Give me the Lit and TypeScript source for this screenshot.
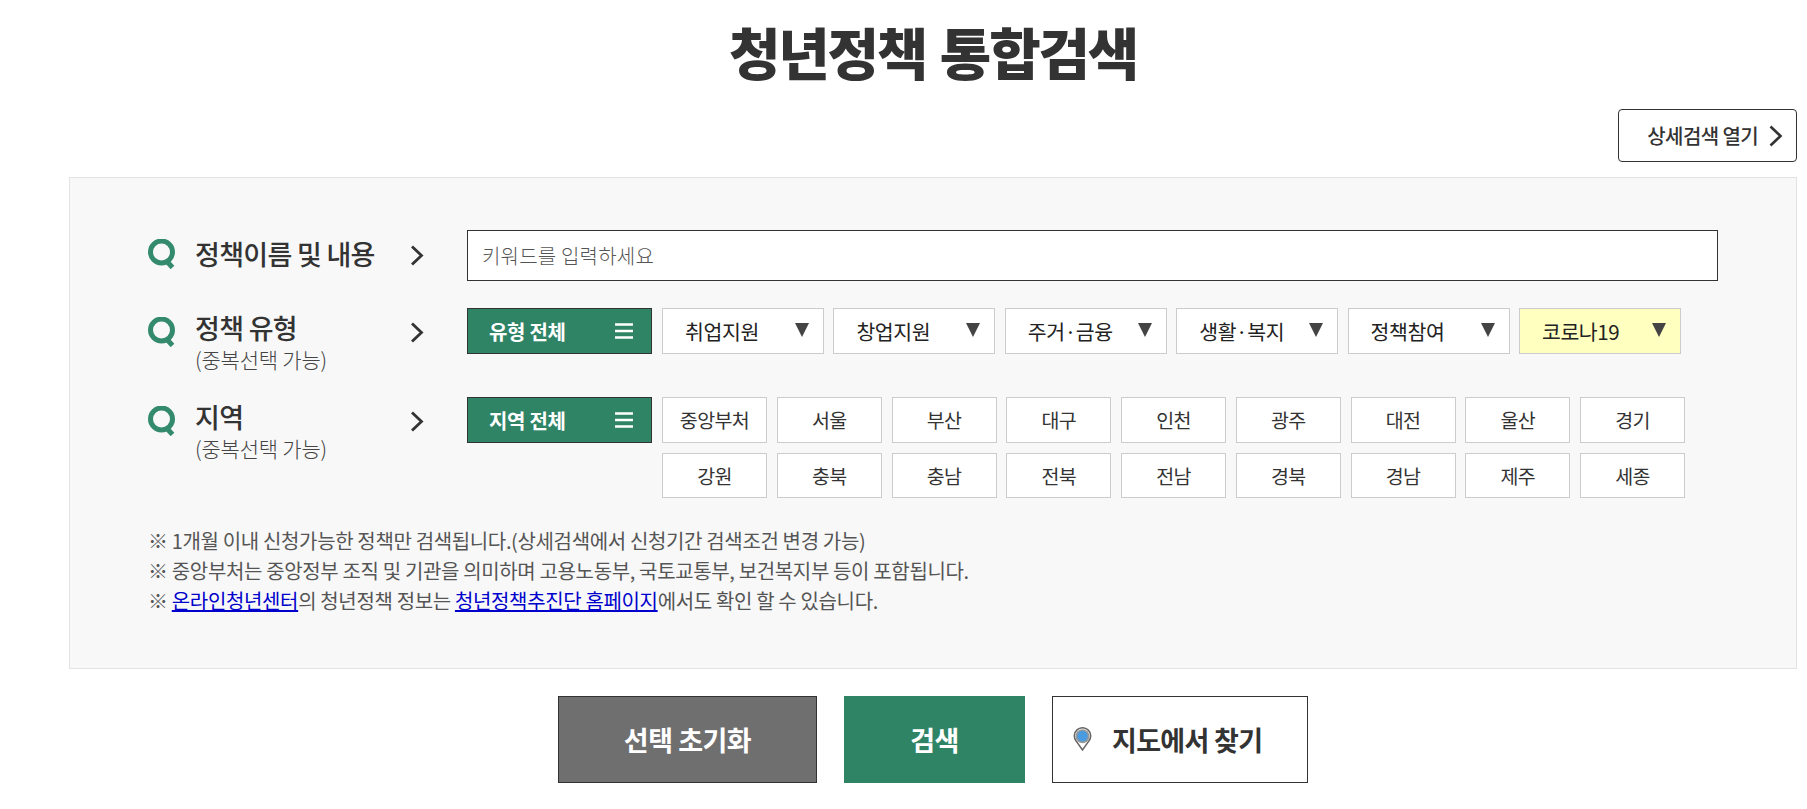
import { LitElement, html, css } from "lit";
import { customElement } from "lit/decorators.js";

const types = ["취업지원", "창업지원", "주거·금융", "생활·복지", "정책참여", "코로나19"];
const regions = ["중앙부처", "서울", "부산", "대구", "인천", "광주", "대전", "울산", "경기", "강원", "충북", "충남", "전북", "전남", "경북", "경남", "제주", "세종"];

const qIcon = html`<svg class="q" viewBox="0 0 28 30" width="28" height="30"><circle cx="13.5" cy="13" r="11" fill="none" stroke="#348a6c" stroke-width="5"/><path d="M19 22.5 L24.5 28.5" stroke="#348a6c" stroke-width="5" fill="none"/></svg>`;
const chev = html`<svg class="chev" viewBox="0 0 14 22" width="14" height="22"><path d="M2 1.5 L11.5 10.5 L2 19.5" fill="none" stroke="#333" stroke-width="2.8"/></svg>`;
const burger = html`<svg class="burger" viewBox="0 0 18 16" width="18" height="16"><path d="M0 1.5H18M0 8H18M0 14.5H18" stroke="#fff" stroke-width="2.6"/></svg>`;

@customElement("app-root")
export class AppRoot extends LitElement {
  static styles = css`
    :host { display: block; width: 1807px; height: 809px; background: #fff; color: #333; font-family: "Noto Sans CJK KR", "Noto Sans", sans-serif; overflow: hidden; }
    * { box-sizing: border-box; }
    .page { padding-left: 69px; width: 1797px; }
    h1 { margin: 0; height: 109px; padding-top: 12px; text-align: center; font-size: 56px; line-height: 78px; font-weight: 900; letter-spacing: -2.2px; word-spacing: 3px; color: #333; }
    .topbar { display: flex; justify-content: flex-end; height: 68px; }
    .detail { width: 179px; height: 53px; border: 1px solid #333; border-radius: 4px; background: #fff; display: flex; align-items: center; justify-content: flex-end; gap: 11px; padding-right: 13px; font-size: 20px; font-weight: 500; letter-spacing: -0.6px; color: #333; }
    .detail svg { flex: none; }
    .panel { width: 1728px; height: 492px; background: #f8f8f8; border: 1px solid #e3e3e6; padding: 52px 0 0 78px; }
    .row { display: flex; align-items: flex-start; }
    .label { width: 319px; display: flex; }
    .q { flex: none; margin-right: 19px; }
    .titles { width: 215px; }
    .t { font-size: 27px; line-height: 38px; font-weight: 500; letter-spacing: -0.7px; color: #333; white-space: nowrap; }
    .s { font-size: 21px; line-height: 24px; font-weight: 300; letter-spacing: -0.2px; color: #444; white-space: nowrap; }
    .chev { flex: none; }
    .r1 { height: 78px; }
    .r1 .q { margin-top: 9px; }
    .r1 .t { padding-top: 5px; }
    .r1 .chev { margin-top: 15px; }
    .input { width: 1251px; height: 51px; border: 1px solid #333; background: #fff; padding: 0 14px; font-size: 20px; line-height: 49px; font-weight: 300; letter-spacing: 0.2px; color: #555; }
    .r2 { height: 89px; }
    .r2 .q { margin-top: 9px; }
    .r2 .chev { margin-top: 14px; }
    .r2 .titles, .r3 .titles { padding-top: 1px; }
    .r3 { height: 129px; }
    .r3 .q { margin-top: 9px; }
    .r3 .chev { margin-top: 14px; }
    .all { flex: none; width: 185px; height: 46px; background: #2f8466; border: 1px solid #333; color: #fff; font-size: 20px; font-weight: 700; letter-spacing: -0.3px; display: flex; align-items: center; justify-content: space-between; padding: 0 18px 0 21px; margin-right: 10px; }
    .types { display: flex; gap: 9.4px; }
    .type { width: 162px; height: 46px; background: #fff; border: 1px solid #ccc; display: flex; align-items: center; justify-content: space-between; padding: 0 14px 0 22px; font-size: 20.5px; font-weight: 400; letter-spacing: -0.4px; color: #222; }
    .type.y { background: #ffffc0; }
    .tri { width: 0; height: 0; border-left: 7px solid transparent; border-right: 7px solid transparent; border-top: 14px solid #444; margin-bottom: 2px; }
    .regions { display: grid; grid-template-columns: repeat(9, 105px); column-gap: 9.75px; row-gap: 10px; }
    .reg { height: 45.5px; background: #fff; border: 1px solid #ccc; display: flex; align-items: center; justify-content: center; font-size: 19.5px; font-weight: 400; letter-spacing: -0.6px; color: #333; }
    .notes { font-size: 20px; line-height: 30px; font-weight: 400; letter-spacing: -0.35px; color: #555; }
    .notes a { color: #0000cc; text-decoration: underline; }
    .actions { display: flex; margin-top: 27px; padding-left: 489px; }
    .btn { height: 87px; display: flex; align-items: center; justify-content: center; font-size: 27px; font-weight: 700; letter-spacing: -0.5px; border: 1px solid #333; }
    .reset { width: 259px; background: #6f6f6f; color: #fff; margin-right: 27px; }
    .go { width: 181px; background: #2f8466; color: #fff; border-color: #2f8466; margin-right: 27px; }
    .map { width: 256px; background: #fff; color: #333; justify-content: flex-start; padding-left: 20px; letter-spacing: -0.7px; }
    .map svg { margin-right: 20px; }
  `;

  render() {
    return html`<div class="page">
      <h1>청년정책 통합검색</h1>
      <div class="topbar"><div class="detail">상세검색 열기 <svg viewBox="0 0 14 24" width="14" height="24"><path d="M1.5 2.5 L11.5 12 L1.5 21.5" fill="none" stroke="#333" stroke-width="2.6"/></svg></div></div>
      <div class="panel">
        <div class="row r1">
          <div class="label">${qIcon}<div class="titles"><div class="t">정책이름 및 내용</div></div>${chev}</div>
          <div class="input">키워드를 입력하세요</div>
        </div>
        <div class="row r2">
          <div class="label">${qIcon}<div class="titles"><div class="t">정책 유형</div><div class="s">(중복선택 가능)</div></div>${chev}</div>
          <div class="row">
            <div class="all">유형 전체 ${burger}</div>
            <div class="types">${types.map((t, i) => html`<div class="type ${i === 5 ? "y" : ""}">${t}<span class="tri"></span></div>`)}</div>
          </div>
        </div>
        <div class="row r3">
          <div class="label">${qIcon}<div class="titles"><div class="t">지역</div><div class="s">(중복선택 가능)</div></div>${chev}</div>
          <div class="row">
            <div class="all">지역 전체 ${burger}</div>
            <div class="regions">${regions.map((r) => html`<div class="reg">${r}</div>`)}</div>
          </div>
        </div>
        <div class="notes">
          <div>※ 1개월 이내 신청가능한 정책만 검색됩니다.(상세검색에서 신청기간 검색조건 변경 가능)</div>
          <div>※ 중앙부처는 중앙정부 조직 및 기관을 의미하며 고용노동부, 국토교통부, 보건복지부 등이 포함됩니다.</div>
          <div>※ <a href="#">온라인청년센터</a>의 청년정책 정보는 <a href="#">청년정책추진단 홈페이지</a>에서도 확인 할 수 있습니다.</div>
        </div>
      </div>
      <div class="actions">
        <div class="btn reset">선택 초기화</div>
        <div class="btn go">검색</div>
        <div class="btn map"><svg viewBox="0 0 20 26" width="19" height="25"><path d="M10 24 L3.2 14.5 A8.6 8.6 0 1 1 16.8 14.5 Z" fill="#fff" stroke="#666" stroke-width="1.6"/><circle cx="10" cy="9.5" r="7.4" fill="#999"/><circle cx="10" cy="9.5" r="5.6" fill="#4a9be0"/></svg>지도에서 찾기</div>
      </div>
    </div>`;
  }
}
